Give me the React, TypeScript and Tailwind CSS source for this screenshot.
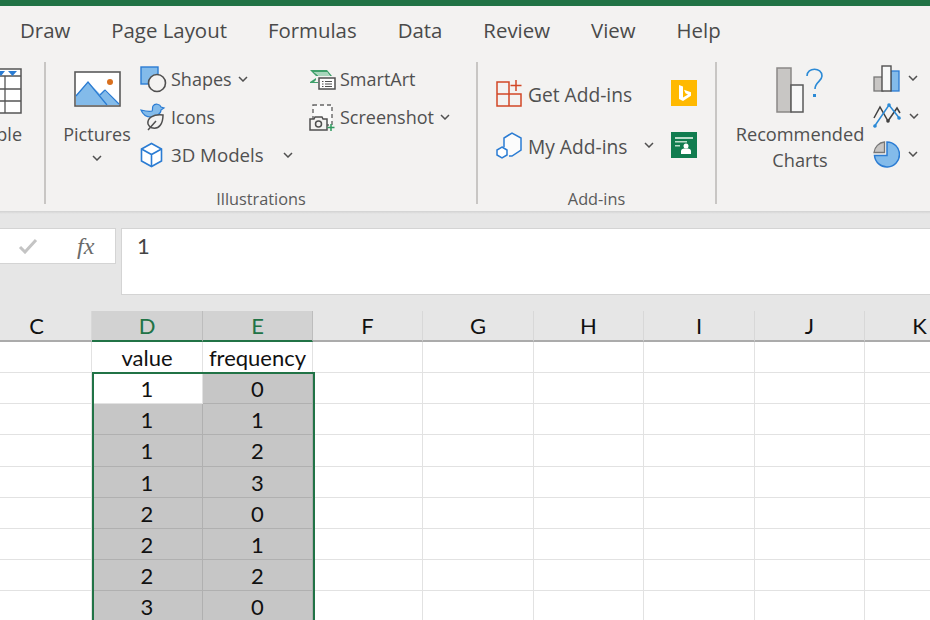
import React from 'react';

const Chevron = ({ className = '' }: { className?: string }) => (
  <svg width="10" height="6" viewBox="0 0 10 6" fill="none" className={className}>
    <path d="M1 1l4 4 4-4" stroke="#505050" strokeWidth="1.5" />
  </svg>
);

const TableIcon = () => (
  <svg width="23" height="46" viewBox="0 0 23 46" fill="none">
    <rect x="-12" y="1" width="34" height="44" fill="#fff" stroke="#555" strokeWidth="1.5" />
    <path d="M-12 8h34M-12 21h34M-12 33h34M6 8v37" stroke="#555" strokeWidth="1.3" />
    <path d="M-2 3h8l-4 5zM9 3h9l-4.500 5z" fill="#2b7cd3" />
  </svg>
);

const PicturesIcon = () => (
  <svg width="47" height="36" viewBox="0 0 47 36" fill="none">
    <rect x="1" y="1" width="45" height="34" fill="#fff" stroke="#5a5a5a" strokeWidth="1.6" />
    <path d="M2 24l12-13 12 12 4-4 15 14v1H2z" fill="#83bbea" />
    <path d="M2 25l12-14 19 23M26 24l5-5 14 14" stroke="#2b7cd3" strokeWidth="1.2" />
    <circle cx="36" cy="11" r="3" fill="#d9701e" />
  </svg>
);

const ShapesIcon = () => (
  <svg width="27" height="27" viewBox="0 0 27 27" fill="none">
    <rect x="1" y="1" width="17" height="17" fill="#83bbea" stroke="#2b7cd3" strokeWidth="1.4" />
    <circle cx="17" cy="17" r="8.500" fill="#f3f2f1" stroke="#505050" strokeWidth="1.6" />
  </svg>
);

const IconsIcon = () => (
  <svg width="26" height="28" viewBox="0 0 26 28" fill="none">
    <path d="M1 7c2 5 6 7 10 7 5 0 10-3 10-7l3-2-3-1c-1-3-6-4-8-1-1 2 0 4-1 5-3 1-7 0-11-1z" fill="#83bbea" stroke="#2b7cd3" strokeWidth="1.2" />
    <path d="M8 21c-1-6 5-10 15-9 0 9-4 14-10 13-2 0-4-2-5-4zM8 27l8-9" fill="#f3f2f1" stroke="#505050" strokeWidth="1.5" />
  </svg>
);

const CubeIcon = () => (
  <svg width="23" height="26" viewBox="0 0 23 26" fill="none" stroke="#2b7cd3" strokeWidth="1.6">
    <path d="M11.500 1.500l10 5.500v12l-10 5.500-10-5.500V7z" fill="#fff" />
    <path d="M1.500 7l10 5.500 10-5.500M11.500 12.500v12" />
  </svg>
);

const SmartArtIcon = () => (
  <svg width="27" height="21" viewBox="0 0 27 21" fill="none">
    <path d="M1 1h17l5 6h-2l-3-4H5l5 4H7zM1 13l6-4v2l-2 2h4v1H1z" fill="#3fa06b" />
    <path d="M5 3h13l3 4H10z" fill="#a8d6bc" />
    <rect x="10" y="9" width="16" height="11" fill="#fff" stroke="#505050" strokeWidth="1.5" />
    <path d="M13 12.500h1.500M16 12.500h7M13 15h1.500M16 15h7M13 17.500h1.500M16 17.500h7" stroke="#505050" />
  </svg>
);

const ScreenshotIcon = () => (
  <svg width="26" height="27" viewBox="0 0 26 27" fill="none">
    <rect x="4" y="1" width="19" height="20" fill="#fafafa" stroke="#666" strokeWidth="1.400" strokeDasharray="4 3" />
    <path d="M1 15h4l1-2h7l1 2h4v11H1z" fill="#f3f2f1" stroke="#505050" strokeWidth="1.500" />
    <circle cx="9.500" cy="20" r="3" fill="none" stroke="#505050" strokeWidth="1.500" />
    <path d="M22 20v7M18.500 23.500h7" stroke="#2f9a5f" strokeWidth="1.500" />
  </svg>
);

const GetAddInsIcon = () => (
  <svg width="27" height="27" viewBox="0 0 27 27" fill="none" stroke="#d24726" strokeWidth="1.500">
    <path d="M1 2h12v24H1zM1 14h24v12H13" />
    <path d="M20 0v11M14.500 5.500h11" />
  </svg>
);

const MyAddInsIcon = () => (
  <svg width="27" height="27" viewBox="0 0 27 27" fill="none" stroke="#2b7cd3" strokeWidth="1.500">
    <path d="M8 15V6l8-5 9 5v12l-9 6h-3" fill="#fcfcfc" />
    <path d="M6 15l5 3v5l-5 3-5-3v-5z" fill="#fff" />
  </svg>
);

const BingIcon = () => (
  <svg width="26" height="26" viewBox="0 0 26 26">
    <rect width="26" height="26" fill="#ffb900" />
    <path d="M8 5l4 1.500v11l5-3-2.500-1.200-1.500-3.500 7 2.500v3.500L12 21l-4-2z" fill="#fff" />
  </svg>
);

const PeopleIcon = () => (
  <svg width="26" height="26" viewBox="0 0 26 26">
    <rect width="26" height="26" fill="#107c4f" />
    <path d="M4 5h18v2H4zM4 9h12v1.500H4zM4 13h5v1.500H4z" fill="#b9dcca" />
    <circle cx="15" cy="14" r="2.500" fill="#fff" />
    <path d="M10 22v-3c0-2 2-2.500 5-2.500s5 .5 5 2.500v3z" fill="#fff" />
  </svg>
);

const RecommendedIcon = () => (
  <svg width="48" height="50" viewBox="0 0 48 50" fill="none">
    <rect x="1" y="1" width="14" height="44" fill="#c8c6c4" stroke="#8a8886" strokeWidth="1.500" />
    <rect x="15" y="18" width="12" height="27" fill="#f7f8f8" stroke="#5a5a5a" strokeWidth="1.500" />
    <path d="M31 9c0-9 15-9 15 0 0 5-7 6-7 13" stroke="#2b8ad6" strokeWidth="1.600" />
    <path d="M37 27h3v3h-3z" fill="#2b8ad6" />
  </svg>
);

const BarsIcon = () => (
  <svg width="27" height="27" viewBox="0 0 27 27" fill="none">
    <rect x="1" y="12" width="9" height="14" fill="#c8c6c4" stroke="#777" strokeWidth="1.300" />
    <rect x="18" y="6" width="8" height="20" fill="#83bbea" stroke="#2b7cd3" strokeWidth="1.300" />
    <rect x="9" y="1" width="9" height="25" fill="#f7f8f8" stroke="#505050" strokeWidth="1.400" />
  </svg>
);

const LinesIcon = () => (
  <svg width="28" height="26" viewBox="0 0 28 26" fill="none">
    <path d="M1 15L7 4l8 14 9-13 3 5" stroke="#404040" strokeWidth="1.500" />
    <path d="M1 24L16 2l11 14" stroke="#2b8ad6" strokeWidth="1.500" />
    <circle cx="2" cy="23" r="1.800" fill="#2b8ad6" />
    <circle cx="16" cy="2" r="1.800" fill="#2b8ad6" />
    <circle cx="26" cy="15" r="1.800" fill="#2b8ad6" />
    <circle cx="15" cy="18" r="1.800" fill="#404040" />
  </svg>
);

const PieIcon = () => (
  <svg width="27" height="27" viewBox="0 0 27 27" fill="none">
    <path d="M14 1a12.500 12.500 0 1 1-12.500 13.500H14z" fill="#83bbea" stroke="#2b7cd3" strokeWidth="1.500" />
    <path d="M11.500 1v10.500H1C1.500 6 6 1.500 11.500 1z" fill="#c8c6c4" stroke="#777" strokeWidth="1.300" />
  </svg>
);

const Tool = ({ icon, label, labelClass = '' }: { icon: React.ReactNode; label: string; labelClass?: string }) => (
  <div className="flex h-[38px] items-center">
    <div className="flex w-[31px] items-center">{icon}</div>
    <span className={labelClass}>{label}</span>
  </div>
);

const GroupLabel = ({ children }: { children: string }) => (
  <div className="mt-auto text-center text-[16.300px] leading-[10px] text-[#5a5a5a]">{children}</div>
);

const columns = ['C', 'D', 'E', 'F', 'G', 'H', 'I', 'J', 'K'];
const rows: [string, string][] = [
  ['1', '0'],
  ['1', '1'],
  ['1', '2'],
  ['1', '3'],
  ['2', '0'],
  ['2', '1'],
  ['2', '2'],
  ['3', '0'],
];

export default function App() {
  return (
    <div className="h-[620px] w-[930px] overflow-hidden bg-white font-['Open_Sans','Noto_Sans',sans-serif] text-[#505050]">
      <div className="h-[6px] bg-[#217346]" />

      {/* Tabs */}
      <div className="flex h-[50px] items-center gap-[41px] bg-[#f3f2f1] pb-[1px] pl-5 text-[20.400px] text-[#4a4a4a]">
        <span>Draw</span>
        <span>Page Layout</span>
        <span>Formulas</span>
        <span>Data</span>
        <span>Review</span>
        <span>View</span>
        <span>Help</span>
      </div>

      {/* Ribbon */}
      <div className="flex h-[155px] items-stretch bg-[#f3f2f1] pb-[7px] pt-[6px] text-[18px]">
        <div className="flex w-[46px] shrink-0 flex-col items-end overflow-hidden border-r-2 border-[#c8c6c4] pr-[22px]">
          <div className="mt-[6px]"><TableIcon /></div>
          <span className="mt-[8px] leading-6">ble</span>
        </div>

        <div className="flex w-[432px] shrink-0 flex-col border-r-2 border-[#c8c6c4]">
          <div className="flex">
            <div className="flex w-[94px] flex-col items-center pl-[8px] pt-[9px]">
              <PicturesIcon />
              <span className="mt-[15px] leading-6">Pictures</span>
              <Chevron className="mt-[9px]" />
            </div>
            <div className="-mt-[2px] w-[169px]">
              <div className="flex h-[38px] items-center">
                <Tool icon={<ShapesIcon />} label="Shapes" />
                <Chevron className="ml-[6px]" />
              </div>
              <Tool icon={<IconsIcon />} label="Icons" />
              <div className="flex h-[38px] items-center">
                <Tool icon={<CubeIcon />} label="3D Models" labelClass="text-[18.700px]" />
                <Chevron className="ml-[19px]" />
              </div>
            </div>
            <div className="-mt-[2px]">
              <Tool icon={<SmartArtIcon />} label="SmartArt" />
              <div className="flex h-[38px] items-center">
                <Tool icon={<ScreenshotIcon />} label="Screenshot" />
                <Chevron className="ml-[6px]" />
              </div>
            </div>
          </div>
          <GroupLabel>Illustrations</GroupLabel>
        </div>

        <div className="flex w-[239px] shrink-0 flex-col border-r-2 border-[#c8c6c4]">
          <div className="flex pl-[18px] pt-[5px]">
            <div className="w-[175px]">
              <div className="flex h-[52px] items-center">
                <Tool icon={<GetAddInsIcon />} label="Get Add-ins" labelClass="ml-[1px] mt-[4px] text-[19.200px]" />
              </div>
              <div className="flex h-[52px] items-center">
                <Tool icon={<MyAddInsIcon />} label="My Add-ins" labelClass="ml-[1px] mt-[4px] text-[19.200px]" />
                <Chevron className="ml-[17px]" />
              </div>
            </div>
            <div>
              <div className="flex h-[52px] items-center"><BingIcon /></div>
              <div className="flex h-[52px] items-center"><PeopleIcon /></div>
            </div>
          </div>
          <GroupLabel>Add-ins</GroupLabel>
        </div>

        <div className="flex flex-1">
          <div className="flex w-[156px] flex-col items-center pl-[10px] pt-[5px]">
            <RecommendedIcon />
            <span className="mt-[4px] text-[18.200px] leading-[26px]">Recommended</span>
            <span className="text-[18.200px] leading-[26px]">Charts</span>
          </div>
          <div className="-mt-[3px] flex flex-col">
            <div className="flex h-[38px] items-center gap-[8px]"><BarsIcon /><Chevron /></div>
            <div className="flex h-[38px] items-center gap-[8px]"><LinesIcon /><Chevron /></div>
            <div className="flex h-[38px] items-center gap-[8px]"><PieIcon /><Chevron /></div>
          </div>
        </div>
      </div>

      {/* Formula bar */}
      <div className="h-[100px] bg-[#e6e6e6]">
        <div className="h-[3px] bg-gradient-to-b from-[#d2d2d2] to-[#e6e6e6]" />
        <div className="flex items-start gap-[5px] pt-[14px]">
          <div className="flex h-[36px] w-[116px] items-center border border-l-0 border-[#d4d4d4] bg-white">
            <svg width="20" height="16" viewBox="0 0 20 16" fill="none" className="ml-[18px]">
              <path d="M2 9l5 5L18 2" stroke="#c4c4c4" strokeWidth="3" />
            </svg>
            <span className="ml-[39px] font-['Liberation_Serif',serif] text-[24px] italic text-[#6a6a6a]">fx</span>
          </div>
          <div className="h-[67px] flex-1 border border-r-0 border-[#d4d4d4] bg-white pl-[15px] pt-[3px] font-['Lato',sans-serif] text-[22px] leading-7 text-[#444]">
            1
          </div>
        </div>
      </div>

      {/* Sheet */}
      <div className="relative overflow-hidden font-['Lato','Open_Sans',sans-serif] text-[22px] leading-[29px] text-[#111]">
        <div className="-ml-[18px] grid grid-cols-[110px_111px_110px_110px_111px_110px_111px_110px_110px]">
          {columns.map((col) => {
            const active = col === 'D' || col === 'E';
            return (
              <div
                key={col}
                className={
                  active
                    ? 'flex h-[31px] items-center justify-center border-r border-b-2 border-r-[#bdbdbd] border-b-[#217346] bg-[#d2d2d2] text-[#217346]'
                    : 'flex h-[31px] items-center justify-center border-r border-b-2 border-r-[#d8d8d8] border-b-[#ababab] bg-[#e6e6e6]'
                }
              >
                {col}
              </div>
            );
          })}
        </div>
        {[null, ...rows].map((row, r) => (
          <div key={r} className="-ml-[18px] grid h-[31.150px] grid-cols-[110px_111px_110px_110px_111px_110px_111px_110px_110px]">
            {columns.map((col, c) => {
              let text = '';
              if (c === 1) text = row ? row[0] : 'value';
              if (c === 2) text = row ? row[1] : 'frequency';
              const selected = row !== null && (c === 1 || c === 2) && !(r === 1 && c === 1);
              return (
                <div
                  key={col}
                  className={
                    selected
                      ? 'flex items-center justify-center border-r border-b border-[#b0b0b0] bg-[#c6c6c6] pt-[1px]'
                      : 'flex items-center justify-center border-r border-b border-[#e2e2e2] pt-[1px]'
                  }
                >
                  {text}
                </div>
              );
            })}
          </div>
        ))}
        {/* selection outline */}
        <div className="pointer-events-none absolute left-[92px] top-[61px] h-[262px] w-[223px] border-2 border-[#217346]" />
      </div>
    </div>
  );
}
